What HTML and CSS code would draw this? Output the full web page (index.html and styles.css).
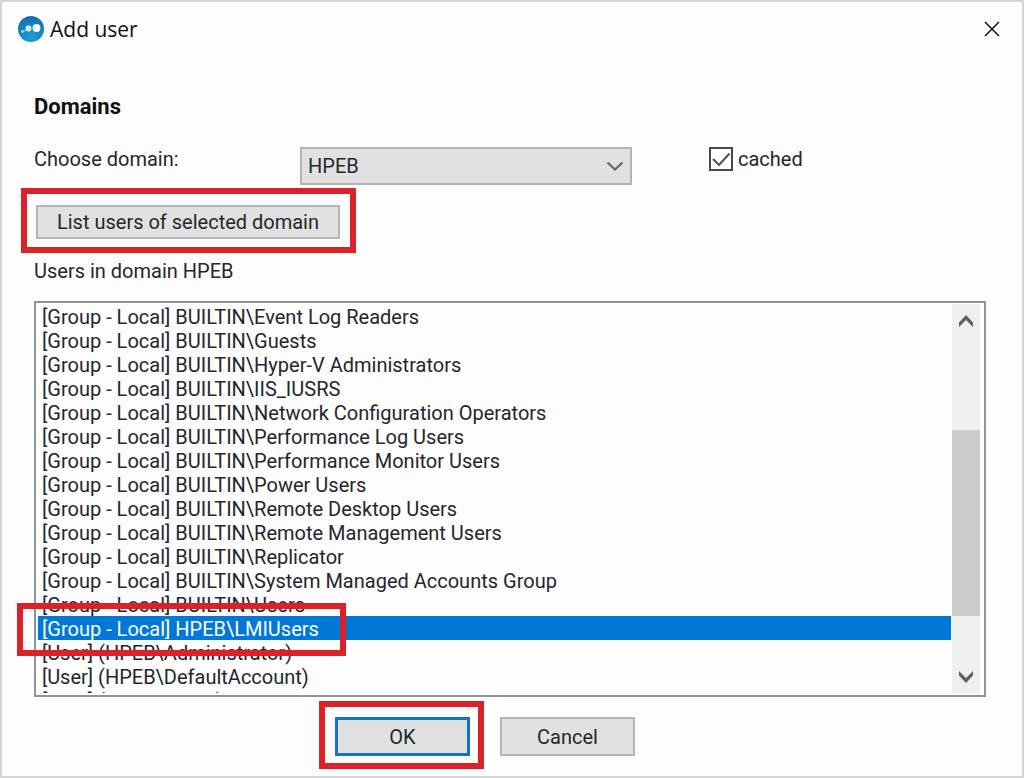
FILE: index.html
```html
<!DOCTYPE html>
<html lang="en">
<head>
<meta charset="utf-8">
<title>Add user</title>
<link rel="stylesheet" href="styles.css">
</head>
<body>
<main class="dialog">
  <header class="titlebar">
    <svg class="logo" viewBox="0 0 26 26" aria-hidden="true">
      <defs><radialGradient id="disc" cx="50%" cy="80%" r="75%"><stop offset="0" stop-color="#1c9fd6"/><stop offset="1" stop-color="#1272ab"/></radialGradient></defs>
      <circle cx="13" cy="13" r="13" fill="url(#disc)"/>
      <circle cx="4.500" cy="15.500" r="1.400" fill="#a9daf0"/>
      <circle cx="10.500" cy="12.500" r="2.900" fill="#e6f5fc"/>
      <circle cx="18.500" cy="12" r="3.900" fill="#fff"/>
      <path d="M5 15.500l5-1.500M11 12.500h6" fill="none" stroke="#8fcdea" stroke-width="1"/>
    </svg>
    <h1 class="title">Add user</h1>
    <button class="close" type="button" aria-label="Close">
      <svg viewBox="0 0 16 16" width="16" height="16"><path d="M1 1l14 14M15 1L1 15" fill="none" stroke="#111" stroke-width="1.500"/></svg>
    </button>
  </header>
  <form class="content">
    <h2 class="heading">Domains</h2>
    <div class="domain-row">
      <label class="domain-label" for="domain">Choose domain:</label>
      <span class="dropdown">
        <select id="domain" class="select"><option>HPEB</option></select>
        <svg class="arrow" viewBox="0 0 18 10" aria-hidden="true"><path d="M1.500 1.500L9 8.500l7.500-7" fill="none" stroke="#666" stroke-width="2.200"/></svg>
      </span>
      <label class="cached">
        <span class="tick">
          <input class="checkbox" type="checkbox" checked>
          <svg class="tick-mark" viewBox="0 0 24 24" aria-hidden="true"><path d="M4 12l6 6L20.500 6.500" fill="none" stroke="#555" stroke-width="2.200"/></svg>
        </span>
        cached
      </label>
    </div>
    <span class="marked marked-list"><button class="button list-button" type="button">List users of selected domain</button></span>
    <p class="users-label" id="users-label">Users in domain HPEB</p>
    <div class="users">
      <ul class="list" role="listbox" aria-labelledby="users-label" tabindex="0">
        <li role="option">[Group - Local] BUILTIN\Event Log Readers</li>
        <li role="option">[Group - Local] BUILTIN\Guests</li>
        <li role="option">[Group - Local] BUILTIN\Hyper-V Administrators</li>
        <li role="option">[Group - Local] BUILTIN\IIS_IUSRS</li>
        <li role="option">[Group - Local] BUILTIN\Network Configuration Operators</li>
        <li role="option">[Group - Local] BUILTIN\Performance Log Users</li>
        <li role="option">[Group - Local] BUILTIN\Performance Monitor Users</li>
        <li role="option">[Group - Local] BUILTIN\Power Users</li>
        <li role="option">[Group - Local] BUILTIN\Remote Desktop Users</li>
        <li role="option">[Group - Local] BUILTIN\Remote Management Users</li>
        <li role="option">[Group - Local] BUILTIN\Replicator</li>
        <li role="option">[Group - Local] BUILTIN\System Managed Accounts Group</li>
        <li role="option">[Group - Local] BUILTIN\Users</li>
        <li role="option" class="selected" aria-selected="true">[Group - Local] HPEB\LMIUsers</li>
        <li role="option">[User] (HPEB\Administrator)</li>
        <li role="option">[User] (HPEB\DefaultAccount)</li>
        <li role="option">[User] (HPEB\Guest)</li>
      </ul>
      <div class="scrollbar">
        <button class="scroll-button" type="button" aria-label="Scroll up"><svg viewBox="0 0 14 12" width="14" height="12"><path d="M0 7.500L7 0l7 7.500V12L7 5 0 12z" fill="#606060"/></svg></button>
        <div class="track"><div class="thumb"></div></div>
        <button class="scroll-button" type="button" aria-label="Scroll down"><svg viewBox="0 0 14 12" width="14" height="12"><path d="M0 4.500L7 12l7-7.500V0L7 7 0 0z" fill="#606060"/></svg></button>
      </div>
      <span class="selection-mark"></span>
    </div>
    <div class="actions">
      <span class="marked marked-ok"><button class="button action default" type="submit">OK</button></span>
      <button class="button action" type="button">Cancel</button>
    </div>
  </form>
</main>
</body>
</html>
```
FILE: styles.css
```css
* {
  box-sizing: border-box;
}

body {
  margin: 0;
  background: #fdfdfd;
  color: #26262c;
  font: 20px/24px Roboto, "Liberation Sans", sans-serif;
}

button,
select {
  color: inherit;
  font: inherit;
}

.dialog {
  min-height: 100vh;
  border: 2px solid #d6d6d6;
}

.titlebar {
  display: flex;
  align-items: center;
  gap: 6px;
  height: 54px;
  padding: 0 22px 0 16px;
}

.logo {
  width: 26px;
  height: 26px;
}

.title {
  flex: 1;
  margin: 0;
  color: #111;
  font: 21px/28px "Open Sans", "Noto Sans", sans-serif;
}

.close {
  display: flex;
  padding: 0;
  border: 0;
  background: none;
}

.content {
  padding: 39px 36px 20px 32px;
}

.heading {
  margin: 0 0 28px;
  color: #111;
  font-size: 22px;
  line-height: 24px;
}

.domain-row {
  display: flex;
  align-items: flex-start;
  margin-bottom: 20px;
}

.domain-label {
  width: 266px;
}

.dropdown {
  position: relative;
  width: 332px;
  margin-right: 77px;
}

.select {
  display: block;
  width: 100%;
  height: 38px;
  padding: 0 40px 0 6px;
  border: 2px solid #b4b4b4;
  border-radius: 0;
  background: #e1e1e1;
  appearance: none;
}

.arrow {
  position: absolute;
  top: 14px;
  right: 8px;
  width: 18px;
  height: 10px;
  pointer-events: none;
}

.cached {
  display: flex;
  align-items: center;
  gap: 5px;
}

.tick {
  position: relative;
  width: 24px;
  height: 24px;
}

.checkbox {
  display: block;
  width: 24px;
  height: 24px;
  margin: 0;
  border: 2px solid #484848;
  background: #fff;
  appearance: none;
}

.tick-mark {
  position: absolute;
  inset: 0;
  visibility: hidden;
  pointer-events: none;
}

.checkbox:checked + .tick-mark {
  visibility: visible;
}

.button {
  padding: 0;
  border: 2px solid #b4b4b4;
  background: #e1e1e1;
}

.list-button {
  display: block;
  width: 304px;
  height: 34px;
}

.marked {
  display: block;
  position: relative;
  width: fit-content;
}

.marked::after,
.selection-mark {
  position: absolute;
  border: 6px solid #dc2229;
  pointer-events: none;
}

.marked::after {
  content: "";
}

.marked-list {
  margin-left: 2px;
}

.marked-list::after {
  inset: -17px -16px -14px -15px;
}

.marked-ok::after {
  inset: -16px -14px -13px -16px;
}

.users-label {
  margin: 20px 0 18px;
}

.users {
  display: flex;
  position: relative;
  height: 396px;
  padding: 1px 4px 1px 2px;
  border: 2px solid #8e9498;
}

.list {
  flex: 1;
  margin: 0 1px 1px 0;
  padding: 0;
  overflow: hidden;
  list-style: none;
}

.list li {
  padding: 1px 4px 0;
  height: 24px;
  line-height: 24px;
  white-space: nowrap;
}

.list .selected {
  background: #0078d7;
  color: #fff;
}

.scrollbar {
  display: flex;
  flex-direction: column;
  width: 28px;
  background: #f0f0f0;
}

.scroll-button {
  display: flex;
  align-items: center;
  justify-content: center;
  height: 34px;
  padding: 0;
  border: 0;
  background: none;
}

.track {
  flex: 1;
  padding: 92px 0 44px;
}

.thumb {
  height: 100%;
  background: #cdcdcd;
}

.selection-mark {
  top: 300px;
  left: -19px;
  width: 329px;
  height: 53px;
}

.actions {
  display: flex;
  gap: 30px;
  padding: 20px 0 0 301px;
}

.action {
  display: block;
  width: 135px;
  height: 39px;
}

.default {
  border: 3px solid #1673c4;
}
```
